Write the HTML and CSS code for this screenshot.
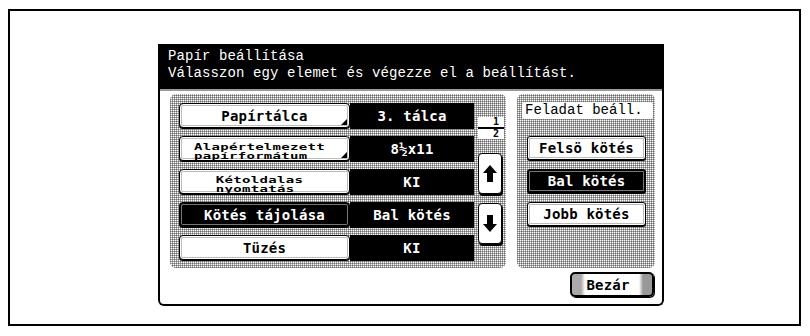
FILE: index.html
```html
<!DOCTYPE html>
<html lang="hu">
<head>
  <meta charset="UTF-8">
  <title>Papír beállítása</title>
  <link rel="stylesheet" href="styles.css">
</head>
<body>
  <div class="frame">
    <div class="dialog">
      <div class="title">Papír beállítása<br>Válasszon egy elemet és végezze el a beállítást.</div>
      <div class="body">
        <div class="main">
          <div class="panel ht settings">
            <div class="rows">
              <div class="row">
                <button class="btn drop">Papírtálca</button>
                <div class="val">3. tálca</div>
              </div>
              <div class="row">
                <button class="btn drop"><span class="two">Alapértelmezett<br>papírformátum</span></button>
                <div class="val">8½x11</div>
              </div>
              <div class="row">
                <button class="btn"><span class="two">Kétoldalas<br>nyomtatás</span></button>
                <div class="val">KI</div>
              </div>
              <div class="row">
                <button class="btn on">Kötés tájolása</button>
                <div class="val">Bal kötés</div>
              </div>
              <div class="row">
                <button class="btn">Tüzés</button>
                <div class="val">KI</div>
              </div>
            </div>
            <div class="side">
              <div class="pager"><span>1</span><span>2</span></div>
              <button class="arrow">
                <svg width="14" height="17" viewBox="0 0 14 17"><path d="M7 0 L14 8 L10 8 L10 17 L4 17 L4 8 L0 8 Z" fill="#000"/></svg>
              </button>
              <button class="arrow">
                <svg width="14" height="17" viewBox="0 0 14 17"><path d="M7 17 L14 9 L10 9 L10 0 L4 0 L4 9 L0 9 Z" fill="#000"/></svg>
              </button>
            </div>
          </div>
          <div class="panel ht job">
            <div class="label">Feladat beáll.</div>
            <button class="opt">Felsö kötés</button>
            <button class="opt on">Bal kötés</button>
            <button class="opt">Jobb kötés</button>
          </div>
        </div>
        <div class="foot">
          <button class="close">Bezár</button>
        </div>
      </div>
    </div>
  </div>
</body>
</html>
```

FILE: styles.css
```css
body {
  margin: 0;
  background: #fff;
  font-family: 'DejaVu Sans Mono', 'Liberation Mono', monospace;
}
button {
  font: inherit;
  padding: 0;
  color: #000;
  cursor: pointer;
}
.frame {
  margin: 9px 0 0 8px;
  border: 2px solid #000;
  padding: 33px 0 0 148px;
  width: 641px;
  height: 280px;
}
.dialog {
  width: 506px;
  height: 262px;
  display: flex;
  flex-direction: column;
}
.title {
  background: #000;
  color: #fff;
  height: 45px;
  box-sizing: border-box;
  padding: 4px 0 0 10px;
  font-family: 'Liberation Mono', monospace;
  font-size: 14px;
  letter-spacing: .1px;
  line-height: 17px;
  white-space: nowrap;
}
.ht {
  background-color: #fff;
  background-image:
    repeating-linear-gradient(0deg, rgba(0,0,0,.35) 0 1px, transparent 1px 2px),
    repeating-linear-gradient(90deg, rgba(0,0,0,.35) 0 1px, transparent 1px 2px);
}
.body {
  flex: 1;
  border: 2px solid #000;
  border-top: 0;
  border-radius: 0 0 6px 6px;
  box-shadow: inset 0 2px 0 #999;
  padding: 5px 7px 0 10px;
  display: flex;
  flex-direction: column;
}
.main {
  display: flex;
  gap: 11px;
}
.panel {
  height: 174px;
  border-radius: 6px;
  box-sizing: border-box;
}
.settings {
  width: 336px;
  display: flex;
  padding: 9px 0 0 9px;
  gap: 4px;
}
.rows {
  display: flex;
  flex-direction: column;
  gap: 7px;
}
.row {
  display: flex;
  height: 26px;
}
.btn,
.opt,
.val,
.close {
  font-weight: bold;
  font-size: 14px;
  letter-spacing: .2px;
}
.btn {
  position: relative;
  width: 171px;
  height: 25px;
  background: #fff;
  border: 1px solid #000;
  border-radius: 4px;
  box-shadow: 0 1px 0 #000, inset 0 0 0 1px #fff, inset 0 0 0 2px #bbb;
  line-height: 14px;
}
.two {
  display: inline-block;
  text-align: left;
  font-size: 14px;
  letter-spacing: .3px;
  line-height: 14px;
  transform: scaleY(.64);
  margin-right: 10px;
}
.btn.drop::after {
  content: "";
  position: absolute;
  right: 2px;
  bottom: 2px;
  border-style: solid;
  border-width: 0 0 6px 6px;
  border-color: transparent transparent #000 transparent;
}
.btn.on {
  background: #000;
  color: #fff;
  box-shadow: 0 1px 0 #000, inset 0 0 0 1px #000, inset 0 0 0 2px #777;
}
.val {
  width: 124px;
  background: #000;
  color: #fff;
  display: flex;
  align-items: center;
  justify-content: center;
}
.side {
  width: 26px;
  display: flex;
  flex-direction: column;
}
.pager {
  margin-top: 14px;
  background: #fff;
  display: flex;
  flex-direction: column;
  font-weight: bold;
  font-size: 10px;
  line-height: 10px;
  text-align: right;
}
.pager span {
  padding-right: 5px;
}
.pager span:first-child {
  border-bottom: 2px solid #000;
}
.arrow {
  width: 24px;
  height: 41px;
  margin-top: 14px;
  background: #fff;
  border: 1px solid #000;
  border-radius: 4px;
  box-shadow: 1px 2px 0 #000;
  display: flex;
  align-items: center;
  justify-content: center;
}
.arrow + .arrow {
  margin-top: 9px;
}
.job {
  width: 138px;
  padding: 8px 0 0 5px;
  display: flex;
  flex-direction: column;
}
.label {
  width: 131px;
  height: 17px;
  box-sizing: border-box;
  background: #fff;
  border-radius: 3px;
  font-family: 'Liberation Mono', monospace;
  font-size: 14px;
  line-height: 17px;
  padding-left: 3px;
  white-space: nowrap;
}
.opt {
  width: 119px;
  height: 24px;
  margin: 17px 0 0 5px;
  background: #fff;
  border: 1px solid #000;
  border-radius: 3px;
  box-shadow: 0 1px 0 #000, inset 0 0 0 1px #fff, inset 0 0 0 2px #bbb;
}
.opt + .opt {
  margin-top: 9px;
}
.opt.on {
  background: #000;
  color: #fff;
  box-shadow: 0 1px 0 #000, inset 0 0 0 1px #000, inset 0 0 0 2px #777;
}
.foot {
  display: flex;
  justify-content: flex-end;
  padding: 4px 1px 0 0;
}
.close {
  width: 84px;
  height: 25px;
  border: 2px solid #000;
  border-radius: 5px;
  box-shadow: 1px 1px 0 #000;
  background:
    linear-gradient(90deg, #aaa 0 9px, #fff 13px calc(100% - 13px), #999 calc(100% - 9px));
  padding-right: 8px;
}
```
